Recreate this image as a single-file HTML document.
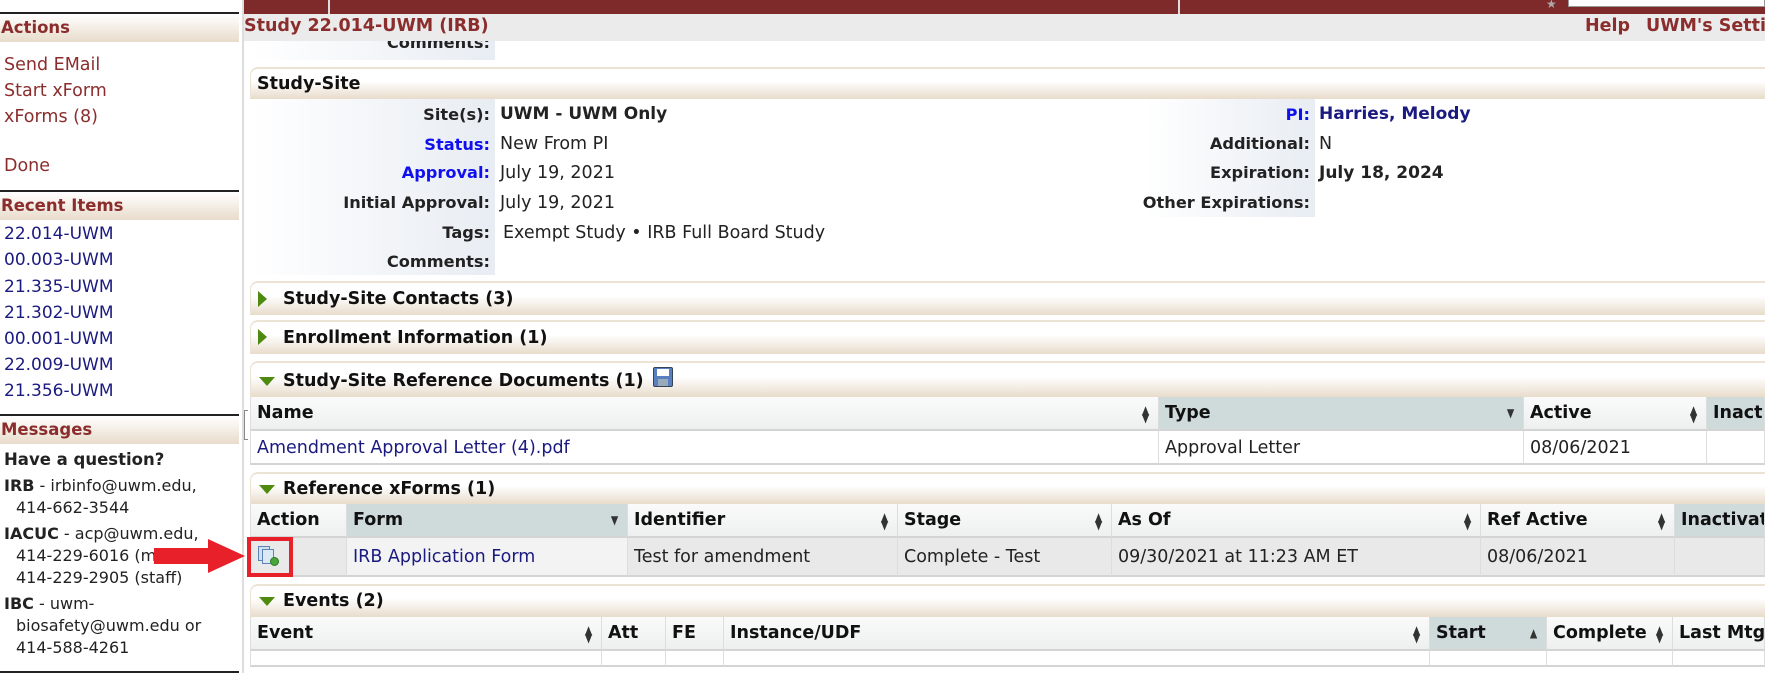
<!DOCTYPE html>
<html><head><meta charset="utf-8"><style>
*{box-sizing:border-box;margin:0;padding:0}
body{width:1765px;height:673px;overflow:hidden;background:#fff;font-family:"DejaVu Sans",Verdana,sans-serif;font-size:17.5px;color:#222;position:relative}
.a{position:absolute;white-space:nowrap}
.sh{position:absolute;left:0;width:239px;height:30px;border-top:2px solid #222;background:linear-gradient(#fff,#e8dccb);color:#8b2d2d;font-weight:bold;font-size:16.5px;padding:4px 1px}
.sl{position:absolute;left:4px;color:#8b2d2d;font-size:17.5px}
.ri{position:absolute;left:4px;color:#1a1a80;font-size:17px}
.m{font-size:16px}
.ph{position:absolute;left:250px;width:1515px;border-top:2px solid #ece3d4;border-left:1px solid #ece3d4;border-radius:8px 0 0 0;background:linear-gradient(#fff 40%,#e8dccb);font-weight:bold;font-size:17.5px;color:#111}
.tri{position:absolute;left:8px;width:0;height:0}
.down{border-left:8px solid transparent;border-right:8px solid transparent;border-top:9px solid #4e8a10}
.right{border-top:8px solid transparent;border-bottom:8px solid transparent;border-left:9px solid #4e8a10}
.lab{position:absolute;text-align:right;font-weight:bold;color:#222;font-size:16.2px}
.blue{color:#1010ee}
.th{position:absolute;height:34px;background:linear-gradient(#fafafa,#eef0f0);border-right:1px solid #ddd;border-bottom:2px solid #d4d4d4;font-weight:bold;padding:6px 6px;color:#111;font-size:17.5px;white-space:nowrap;overflow:hidden}
.srt{background:#cfdadb}
.td{position:absolute;border-right:1px solid #ddd;border-bottom:2px solid #d4d4d4;padding:7px 6px;white-space:nowrap;overflow:hidden}
.ud{position:absolute;right:8px;top:9px;font-size:12px;line-height:8px;color:#333;transform:scaleX(0.8)}
</style></head><body>

<div class="a" style="left:244px;top:0;width:1521px;height:14px;background:#7f2a2a"></div>
<div class="a" style="left:328px;top:0;width:2px;height:14px;background:#ddd"></div>
<div class="a" style="left:1178px;top:0;width:2px;height:14px;background:#ddd"></div>
<div class="a" style="left:1546px;top:0;color:#aaa;font-size:12px;line-height:8px">★</div>
<div class="a" style="left:1568px;top:0;width:197px;height:7px;background:#fff;border:1px solid #999;border-top:none"></div>
<div class="a" style="left:244px;top:14px;width:1521px;height:27px;background:#ebebeb"></div>
<div class="a" style="left:244px;top:16px;color:#8b2d2d;font-weight:bold;font-size:17.5px">Study 22.014-UWM (IRB)</div>
<div class="a" style="left:1585px;top:16px;color:#8b2d2d;font-weight:bold;font-size:17.5px">Help</div>
<div class="a" style="left:1646px;top:16px;color:#8b2d2d;font-weight:bold;font-size:17.5px">UWM's Settings</div>

<div class="a" style="left:242px;top:0;width:2px;height:673px;background:#ddd"></div>
<div class="a" style="left:244px;top:410px;width:4px;height:30px;border:1px solid #888;border-right:none"></div>
<div class="sh" style="top:12px">Actions</div>
<div class="sl" style="top:55px">Send EMail</div>
<div class="sl" style="top:81px">Start xForm</div>
<div class="sl" style="top:107px">xForms (8)</div>
<div class="sl" style="top:156px">Done</div>
<div class="sh" style="top:190px">Recent Items</div>
<div class="ri" style="top:224px">22.014-UWM</div>
<div class="ri" style="top:250px">00.003-UWM</div>
<div class="ri" style="top:277px">21.335-UWM</div>
<div class="ri" style="top:303px">21.302-UWM</div>
<div class="ri" style="top:329px">00.001-UWM</div>
<div class="ri" style="top:355px">22.009-UWM</div>
<div class="ri" style="top:381px">21.356-UWM</div>
<div class="sh" style="top:414px">Messages</div>
<div class="a m" style="left:4px;top:450px;font-weight:bold;font-size:16.5px">Have a question?</div>
<div class="a m" style="left:4px;top:476px"><b>IRB</b> - irbinfo@uwm.edu,</div>
<div class="a m" style="left:16px;top:498px">414-662-3544</div>
<div class="a m" style="left:4px;top:524px"><b>IACUC</b> - acp@uwm.edu,</div>
<div class="a m" style="left:16px;top:546px">414-229-6016 (main)</div>
<div class="a m" style="left:16px;top:568px">414-229-2905 (staff)</div>
<div class="a m" style="left:4px;top:594px"><b>IBC</b> - uwm-</div>
<div class="a m" style="left:16px;top:616px">biosafety@uwm.edu or</div>
<div class="a m" style="left:16px;top:638px">414-588-4261</div>
<div class="a" style="left:0;top:671px;width:239px;height:2px;background:#222"></div>

<div class="a" style="left:250px;top:41px;width:245px;height:19px;background:linear-gradient(90deg,#fff,#e8edf3)"></div>
<div class="lab" style="left:250px;width:240px;top:41px;overflow:hidden;height:17px"><span style="position:relative;top:-8px">Comments:</span></div>

<div class="ph" style="top:67px;height:32px"><span class="a" style="left:6px;top:5px">Study-Site</span></div>
<div class="a" style="left:250px;top:99px;width:245px;height:176px;background:linear-gradient(90deg,#fff,#e8edf3)"></div>
<div class="a" style="left:1145px;top:99px;width:170px;height:118px;background:linear-gradient(90deg,#fff,#e8edf3)"></div>
<div class="lab" style="left:250px;width:240px;top:105px">Site(s):</div>
<div class="lab blue" style="left:250px;width:240px;top:135px">Status:</div>
<div class="lab blue" style="left:250px;width:240px;top:163px">Approval:</div>
<div class="lab" style="left:250px;width:240px;top:193px">Initial Approval:</div>
<div class="lab" style="left:250px;width:240px;top:223px">Tags:</div>
<div class="lab" style="left:250px;width:240px;top:252px">Comments:</div>
<div class="a" style="left:500px;top:104px;font-weight:bold;font-size:17px">UWM - UWM Only</div>
<div class="a" style="left:500px;top:134px">New From PI</div>
<div class="a" style="left:500px;top:163px">July 19, 2021</div>
<div class="a" style="left:500px;top:193px">July 19, 2021</div>
<div class="a" style="left:503px;top:223px">Exempt Study • IRB Full Board Study</div>
<div class="lab blue" style="left:1100px;width:210px;top:105px">PI:</div>
<div class="lab" style="left:1100px;width:210px;top:134px">Additional:</div>
<div class="lab" style="left:1100px;width:210px;top:163px">Expiration:</div>
<div class="lab" style="left:1100px;width:210px;top:193px">Other Expirations:</div>
<div class="a" style="left:1319px;top:104px;font-weight:bold;color:#1a1a80;font-size:17px">Harries, Melody</div>
<div class="a" style="left:1319px;top:134px">N</div>
<div class="a" style="left:1319px;top:163px;font-weight:bold;font-size:17px">July 18, 2024</div>

<div class="ph" style="top:281px;height:34px"><span class="tri right" style="top:8px;left:7px"></span><span class="a" style="left:32px;top:6px">Study-Site Contacts (3)</span></div>
<div class="ph" style="top:320px;height:34px"><span class="tri right" style="top:7px;left:7px"></span><span class="a" style="left:32px;top:6px">Enrollment Information (1)</span></div>

<div class="ph" style="top:361px;height:36px"><span class="tri down" style="top:14px"></span><span class="a" style="left:32px;top:8px">Study-Site Reference Documents (1)</span>
<span class="a" style="left:402px;top:4px;width:20px;height:20px;background:#5a7fbf;border:1px solid #345;border-radius:2px"><span class="a" style="left:3px;top:1px;width:12px;height:7px;background:#fff"></span><span class="a" style="left:4px;top:11px;width:10px;height:7px;background:#9ab"></span></span></div>
<div class="th" style="left:250px;top:397px;width:909px;border-left:1px solid #ddd">Name<span class="ud">▲<br>▼</span></div>
<div class="th srt" style="left:1159px;top:397px;width:365px">Type<span class="ud" style="top:12px">▼</span></div>
<div class="th" style="left:1524px;top:397px;width:183px">Active<span class="ud">▲<br>▼</span></div>
<div class="th srt" style="left:1707px;top:397px;width:58px">Inactive</div>
<div class="td" style="left:250px;top:431px;width:909px;height:34px;border-left:1px solid #ddd;color:#1a1a80">Amendment Approval Letter (4).pdf</div>
<div class="td" style="left:1159px;top:431px;width:365px;height:34px">Approval Letter</div>
<div class="td" style="left:1524px;top:431px;width:183px;height:34px">08/06/2021</div>
<div class="td" style="left:1707px;top:431px;width:58px;height:34px"></div>

<div class="ph" style="top:472px;height:32px"><span class="tri down" style="top:11px"></span><span class="a" style="left:32px;top:5px">Reference xForms (1)</span></div>
<div class="th" style="left:250px;top:504px;width:97px;border-left:1px solid #ddd">Action</div>
<div class="th srt" style="left:347px;top:504px;width:281px">Form<span class="ud" style="top:12px">▼</span></div>
<div class="th" style="left:628px;top:504px;width:270px">Identifier<span class="ud">▲<br>▼</span></div>
<div class="th" style="left:898px;top:504px;width:214px">Stage<span class="ud">▲<br>▼</span></div>
<div class="th" style="left:1112px;top:504px;width:369px">As Of<span class="ud">▲<br>▼</span></div>
<div class="th" style="left:1481px;top:504px;width:194px">Ref Active<span class="ud">▲<br>▼</span></div>
<div class="th srt" style="left:1675px;top:504px;width:90px">Inactivated</div>
<div class="td" style="left:250px;top:538px;width:97px;height:39px;background:#e9e9e9;border-left:1px solid #ddd"></div>
<div class="td" style="left:347px;top:538px;width:281px;height:39px;background:#f3f3f3;color:#1a1a80;padding-top:9px">IRB Application Form</div>
<div class="td" style="left:628px;top:538px;width:270px;height:39px;background:#e9e9e9;padding-top:9px">Test for amendment</div>
<div class="td" style="left:898px;top:538px;width:214px;height:39px;background:#e9e9e9;padding-top:9px">Complete - Test</div>
<div class="td" style="left:1112px;top:538px;width:369px;height:39px;background:#e9e9e9;padding-top:9px">09/30/2021 at 11:23 AM ET</div>
<div class="td" style="left:1481px;top:538px;width:194px;height:39px;background:#e9e9e9;padding-top:9px">08/06/2021</div>
<div class="td" style="left:1675px;top:538px;width:90px;height:39px;background:#e9e9e9"></div>
<div class="a" style="left:258px;top:546px;width:12px;height:15px;background:#cfe0f2;border:1px solid #5d83b5"></div>
<div class="a" style="left:262px;top:549px;width:12px;height:15px;background:#dbe8f6;border:1px solid #5d83b5"></div>
<div class="a" style="left:270px;top:557px;width:9px;height:9px;border-radius:50%;background:#4aa53a;border:1px solid #2d7a24"></div>
<div class="a" style="left:247px;top:537px;width:46px;height:40px;border:4px solid #e8202a"></div>
<svg class="a" style="left:152px;top:538px" width="94" height="36"><polygon points="2,10 56,10 56,1 93,18 56,35 56,26 2,26" fill="#e8202a"/></svg>

<div class="ph" style="top:584px;height:33px"><span class="tri down" style="top:11px"></span><span class="a" style="left:32px;top:5px">Events (2)</span></div>
<div class="th" style="left:250px;top:617px;width:352px;border-left:1px solid #ddd">Event<span class="ud">▲<br>▼</span></div>
<div class="th" style="left:602px;top:617px;width:64px">Att</div>
<div class="th" style="left:666px;top:617px;width:58px">FE</div>
<div class="th" style="left:724px;top:617px;width:706px">Instance/UDF<span class="ud">▲<br>▼</span></div>
<div class="th srt" style="left:1430px;top:617px;width:117px">Start<span class="ud" style="top:12px">▲</span></div>
<div class="th" style="left:1547px;top:617px;width:126px">Complete<span class="ud">▲<br>▼</span></div>
<div class="th" style="left:1673px;top:617px;width:92px">Last Mtg</div>
<div class="td" style="left:250px;top:651px;width:352px;height:12px;border-left:1px solid #ddd"></div>
<div class="td" style="left:602px;top:651px;width:64px;height:12px"></div>
<div class="td" style="left:666px;top:651px;width:58px;height:12px"></div>
<div class="td" style="left:724px;top:651px;width:706px;height:12px"></div>
<div class="td" style="left:1430px;top:651px;width:117px;height:12px"></div>
<div class="td" style="left:1547px;top:651px;width:126px;height:12px"></div>
<div class="td" style="left:1673px;top:651px;width:92px;height:12px"></div>
</body></html>
